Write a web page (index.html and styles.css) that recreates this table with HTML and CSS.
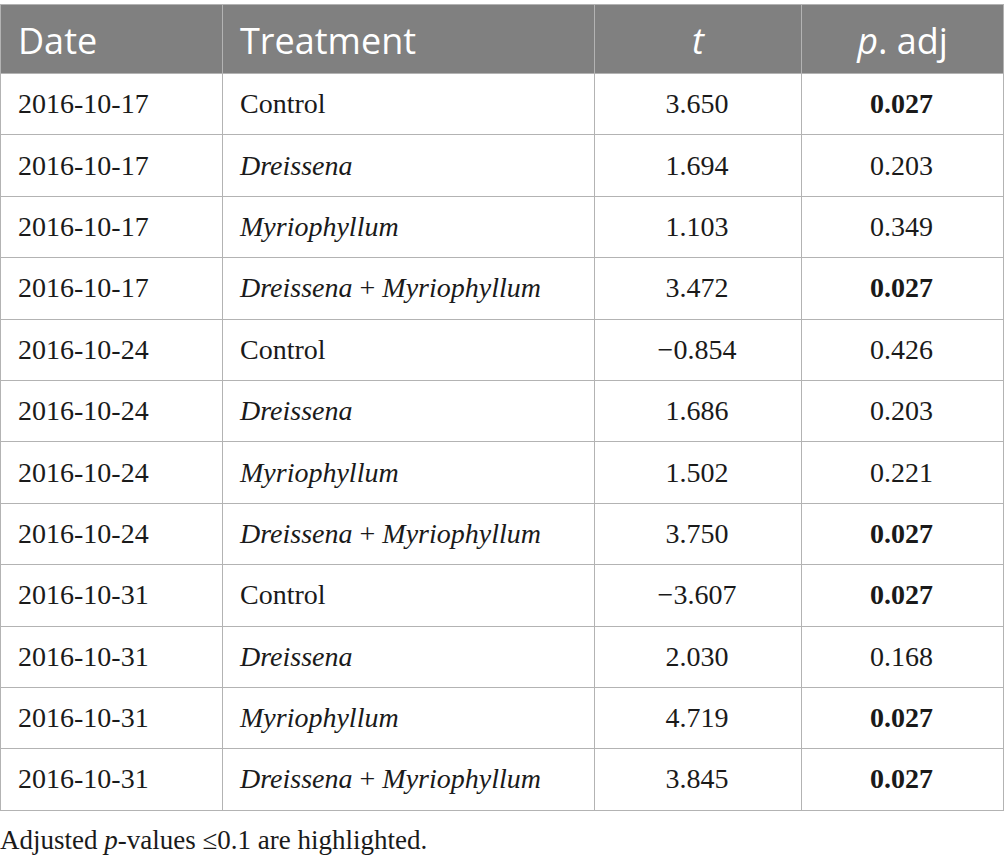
FILE: index.html
```html
<!DOCTYPE html>
<html>
<head>
<meta charset="utf-8">
<link rel="stylesheet" href="styles.css">
</head>
<body>
<div class="wrap">
<table class="data">
  <colgroup>
    <col class="c-date"><col class="c-treat"><col class="c-t"><col class="c-p">
  </colgroup>
  <thead>
    <tr>
      <th class="left">Date</th>
      <th class="left">Treatment</th>
      <th class="center"><i>t</i></th>
      <th class="center"><i>p</i>. adj</th>
    </tr>
  </thead>
  <tbody>
    <tr><td>2016-10-17</td><td>Control</td><td class="center">3.650</td><td class="center"><b>0.027</b></td></tr>
    <tr><td>2016-10-17</td><td><i>Dreissena</i></td><td class="center">1.694</td><td class="center">0.203</td></tr>
    <tr><td>2016-10-17</td><td><i>Myriophyllum</i></td><td class="center">1.103</td><td class="center">0.349</td></tr>
    <tr><td>2016-10-17</td><td><i>Dreissena</i> + <i>Myriophyllum</i></td><td class="center">3.472</td><td class="center"><b>0.027</b></td></tr>
    <tr><td>2016-10-24</td><td>Control</td><td class="center">−0.854</td><td class="center">0.426</td></tr>
    <tr><td>2016-10-24</td><td><i>Dreissena</i></td><td class="center">1.686</td><td class="center">0.203</td></tr>
    <tr><td>2016-10-24</td><td><i>Myriophyllum</i></td><td class="center">1.502</td><td class="center">0.221</td></tr>
    <tr><td>2016-10-24</td><td><i>Dreissena</i> + <i>Myriophyllum</i></td><td class="center">3.750</td><td class="center"><b>0.027</b></td></tr>
    <tr><td>2016-10-31</td><td>Control</td><td class="center">−3.607</td><td class="center"><b>0.027</b></td></tr>
    <tr><td>2016-10-31</td><td><i>Dreissena</i></td><td class="center">2.030</td><td class="center">0.168</td></tr>
    <tr><td>2016-10-31</td><td><i>Myriophyllum</i></td><td class="center">4.719</td><td class="center"><b>0.027</b></td></tr>
    <tr><td>2016-10-31</td><td><i>Dreissena</i> + <i>Myriophyllum</i></td><td class="center">3.845</td><td class="center"><b>0.027</b></td></tr>
  </tbody>
</table>
<p class="note">Adjusted <i>p</i>-values ≤0.1 are highlighted.</p>
</div>
</body>
</html>
```

FILE: styles.css
```css
html, body {
  margin: 0;
  padding: 0;
  background: #ffffff;
}

.wrap {
  padding-top: 4px;
}

.data {
  border-collapse: collapse;
  width: 1003px;
  table-layout: fixed;
  font-family: "Liberation Serif", "Times New Roman", serif;
  color: #1a1a1a;
}

.c-date { width: 222px; }
.c-treat { width: 372px; }
.c-t { width: 207px; }
.c-p { width: 202px; }

.data th,
.data td {
  border: 1px solid #b3b3b3;
  padding: 0 0 0 17px;
  vertical-align: middle;
  text-align: left;
  white-space: nowrap;
}

.data th {
  height: 66px;
  background: #808080;
  color: #ffffff;
  font-family: "Open Sans", "Noto Sans", sans-serif;
  font-weight: 400;
  font-size: 36px;
  padding-top: 2px;
}

.data td {
  height: 60.4px;
  font-size: 28px;
}

.data .center {
  text-align: center;
  padding-left: 0;
}

.data td.center {
  padding-right: 2px;
}

.note {
  margin: 14px 0 0 0;
  font-family: "Liberation Serif", "Times New Roman", serif;
  font-size: 27px;
  line-height: 30px;
  color: #1a1a1a;
}
```
